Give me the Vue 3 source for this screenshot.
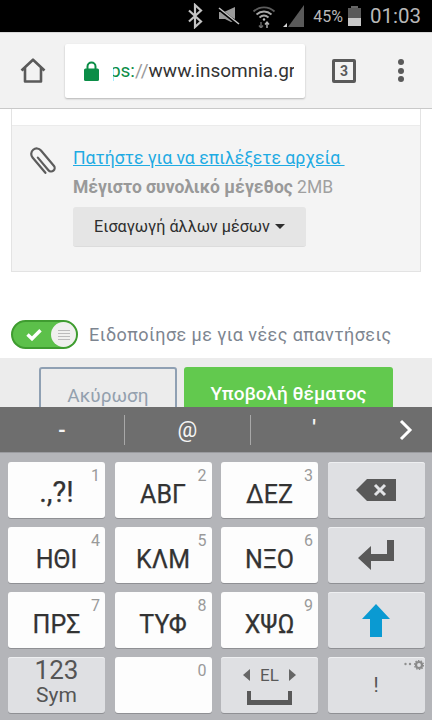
<template>
  <div class="phone">
    <!-- Android status bar -->
    <div class="status-bar">
      <svg class="st-icon" width="16" height="26" viewBox="0 0 16 26" fill="none" stroke="#c4c4c4" stroke-width="2.2">
        <path d="M2 7.5l12 11-6 5.5V2l6 5.5-12 11" />
      </svg>
      <svg class="st-icon mute" width="22" height="20" viewBox="0 0 22 20">
        <path d="M1 6h5l0 0L17 1v12z" fill="#9a9a9a" />
        <path d="M1 6l6 0 9 9-3 1-6-3H1z" fill="#9a9a9a" />
        <path d="M1 3l20 16" stroke="#000" stroke-width="3" />
        <path d="M1 2l20 16" stroke="#c4c4c4" stroke-width="1.6" />
      </svg>
      <svg class="st-icon wifi" width="24" height="24" viewBox="0 0 24 24" fill="none" stroke="#a8a8a8" stroke-width="1.8">
        <path d="M1.5 7.5c6-5.5 15-5.5 21 0" stroke="#5c5c5c" />
        <path d="M4.5 10.5c4.5-4 10.5-4 15 0" />
        <path d="M7.5 13.5c2.700-2.400 6.300-2.400 9 0" />
        <circle cx="12" cy="15.500" r="1.200" fill="#c4c4c4" stroke="none" />
        <path d="M9 18v6M7 21.500l2 2.500 2-2.500" stroke="#6a6a6a" stroke-width="1.400" />
        <path d="M15 24v-6M13 20.500l2-2.500 2 2.500" stroke="#b4b4b4" stroke-width="1.400" />
      </svg>
      <svg class="st-icon signal" width="22" height="22" viewBox="0 0 22 22">
        <path d="M21 0v22H5z" fill="#5a5a5a" />
        <path d="M0 22l4-4v4z" fill="#d8d8d8" />
      </svg>
      <span class="pct">45%</span>
      <div class="battery">
        <div class="battery-cap"></div>
        <div class="battery-body"><div class="battery-fill" :style="{ height: battery + '%' }"></div></div>
      </div>
      <span class="clock">01:03</span>
    </div>

    <!-- Browser toolbar -->
    <div class="toolbar">
      <svg class="home" width="26" height="25" viewBox="0 0 26 25" fill="none" stroke="#5a5a5a" stroke-width="2.600" stroke-linejoin="round">
        <path d="M1.500 12.500L13 1.700l11.500 10.800M5 10v13.500h16V10" />
      </svg>
      <div class="url-bar">
        <svg width="15" height="20" viewBox="0 0 15 20" class="lock">
          <path d="M3.500 8V5.500a4 4 0 0 1 8 0V8" fill="none" stroke="#0b8d47" stroke-width="2" />
          <rect x="0" y="7.500" width="15" height="12.500" rx="1.500" fill="#0b8d47" />
        </svg>
        <div class="url-clip">
          <div class="url-text"><span class="scheme">https:</span><span class="slashes">//</span>www.insomnia.gr</div>
        </div>
      </div>
      <div class="tabs">3</div>
      <div class="menu"><i></i><i></i><i></i></div>
    </div>

    <!-- Page -->
    <div class="page">
      <div class="panel">
        <div class="panel-top"></div>
        <div class="upload">
          <svg class="clip" width="27" height="30" viewBox="0 0 27 30" fill="none" stroke="#5c5c5c" stroke-width="2.200" stroke-linecap="round">
            <path d="M-1.500-7V9.500a3.500 3.500 0 0 0 7 0V-10.500a5.500 5.500 0 0 0-11 0V9.500" transform="translate(13.500 15) rotate(-40)" />
          </svg>
          <div class="upload-body">
            <a class="pick-link">Πατήστε για να επιλέξετε αρχεία&nbsp;</a>
            <div class="limit"><b>Μέγιστο συνολικό μέγεθος</b> 2MB</div>
            <div class="media-btn">Εισαγωγή άλλων μέσων<span class="caret"></span></div>
          </div>
        </div>
      </div>

      <div class="notify">
        <div class="toggle">
          <svg width="16" height="13" viewBox="0 0 16 13" fill="none" stroke="#fff" stroke-width="3.400">
            <path d="M1.500 6.500l4.500 4.300 8.500-8.500" />
          </svg>
          <div class="knob"><i></i><i></i><i></i><i></i></div>
        </div>
        <span class="notify-label">Ειδοποίησε με για νέες απαντήσεις</span>
      </div>

      <div class="actions">
        <div class="btn cancel">Ακύρωση</div>
        <div class="btn submit">Υποβολή θέματος</div>
      </div>
    </div>

    <!-- Keyboard suggestion strip -->
    <div class="suggest">
      <span class="sg dash">-</span>
      <span class="sg at">@</span>
      <span class="sg tick">'</span>
      <svg class="chev" width="14" height="22" viewBox="0 0 14 22" fill="none" stroke="#fff" stroke-width="3">
        <path d="M2 2l9 9-9 9" />
      </svg>
    </div>

    <!-- Keyboard -->
    <div class="keyboard">
      <template v-for="k in keys" :key="k.label">
        <div v-if="k.num" class="key">
          <sup class="num">{{ k.num }}</sup>
          <span class="letters" :class="{ punct: k.num === '1' }">{{ k.label }}</span>
        </div>

        <div v-else-if="k.kind === 'back'" class="key fn">
          <svg width="40" height="22" viewBox="0 0 40 22">
            <path d="M0 11L11 0h29v22H11z" fill="#595959" />
            <path d="M19 6l10 10M29 6L19 16" stroke="#e2e3e6" stroke-width="3" />
          </svg>
        </div>
        <div v-else-if="k.kind === 'enter'" class="key fn">
          <svg width="36" height="32" viewBox="0 0 36 32">
            <path d="M29 1h7v21H13v9L0 19 13 7v8h16z" fill="#595959" />
          </svg>
        </div>
        <div v-else-if="k.kind === 'shift'" class="key fn">
          <svg width="28" height="33" viewBox="0 0 28 33">
            <path d="M14 0l14 15h-8v18H8V15H0z" fill="#0a9ad2" />
          </svg>
        </div>
        <div v-else-if="k.kind === 'sym'" class="key fn sym">
          <span class="sym-top">123</span>
          <span class="sym-bot">Sym</span>
        </div>
        <div v-else-if="k.kind === 'zero'" class="key">
          <sup class="num">0</sup>
        </div>
        <div v-else-if="k.kind === 'space'" class="key fn space">
          <div class="lang"><span class="tri left"></span>EL<span class="tri right"></span></div>
          <svg width="45" height="14" viewBox="0 0 45 14">
            <path d="M0 0h4v9h37V0h4v14H0z" fill="#595959" />
          </svg>
        </div>
        <div v-else class="key fn">
          <svg class="gear" width="20" height="10" viewBox="0 0 20 10">
            <circle cx="1.500" cy="4" r="1.200" fill="#8f8f8f" />
            <circle cx="6" cy="4" r="1.200" fill="#8f8f8f" />
            <circle cx="15" cy="5" r="3" fill="none" stroke="#8a8a8a" stroke-width="2.200" />
            <circle cx="15" cy="5" r="4.500" fill="none" stroke="#8a8a8a" stroke-width="1.200" stroke-dasharray="1.500 1.300" />
          </svg>
          <span class="bang">!</span>
        </div>
      </template>
    </div>
  </div>
</template>

<script setup>
const battery = 45

const keys = [
  { label: '.,?!', num: '1' },
  { label: 'ΑΒΓ', num: '2' },
  { label: 'ΔΕΖ', num: '3' },
  { label: 'back', kind: 'back' },
  { label: 'ΗΘΙ', num: '4' },
  { label: 'ΚΛΜ', num: '5' },
  { label: 'ΝΞΟ', num: '6' },
  { label: 'enter', kind: 'enter' },
  { label: 'ΠΡΣ', num: '7' },
  { label: 'ΤΥΦ', num: '8' },
  { label: 'ΧΨΩ', num: '9' },
  { label: 'shift', kind: 'shift' },
  { label: 'sym', kind: 'sym' },
  { label: 'zero', kind: 'zero' },
  { label: 'space', kind: 'space' },
  { label: 'bang', kind: 'bang' }
]
</script>

<style>
html, body {
  margin: 0;
  background: #fff;
}
</style>

<style scoped>
.phone {
  width: 432px;
  height: 720px;
  display: flex;
  flex-direction: column;
  overflow: hidden;
  font-family: Roboto, "Noto Sans", sans-serif;
}

/* Status bar */
.status-bar {
  height: 32px;
  flex-shrink: 0;
  background: #000;
  border-bottom: 1px solid #d8d8d8;
  display: flex;
  align-items: center;
  justify-content: flex-end;
  padding-right: 11px;
  color: #b8b8b8;
}
.st-icon {
  flex-shrink: 0;
}
.mute {
  margin-left: 15px;
}
.wifi {
  margin-left: 12px;
}
.signal {
  margin-left: 7px;
}
.pct {
  font-size: 16px;
  margin-left: 8px;
}
.battery {
  margin-left: 5px;
  width: 13px;
  display: flex;
  flex-direction: column;
  align-items: center;
}
.battery-cap {
  width: 7px;
  height: 2px;
  background: #666;
}
.battery-body {
  width: 13px;
  height: 18px;
  background: #5a5a5a;
  display: flex;
  flex-direction: column;
  justify-content: flex-end;
}
.battery-fill {
  background: #c8c8c8;
}
.clock {
  font-size: 20.500px;
  margin-left: 9px;
}

/* Toolbar */
.toolbar {
  height: 75px;
  flex-shrink: 0;
  background: #f2f2f2;
  border-bottom: 1px solid #c9c9c9;
  display: flex;
  align-items: center;
  box-sizing: content-box;
}
.home {
  margin-left: 20px;
  flex-shrink: 0;
}
.url-bar {
  margin-left: 19px;
  width: 240px;
  height: 54px;
  background: #fff;
  border-radius: 2px;
  box-shadow: 0 1px 2px rgba(0, 0, 0, 0.25);
  display: flex;
  align-items: center;
  padding-left: 19px;
  box-sizing: border-box;
}
.lock {
  flex-shrink: 0;
}
.url-clip {
  margin-left: 14px;
  width: 181px;
  overflow: hidden;
}
.url-text {
  margin-left: -26px;
  white-space: nowrap;
  font-size: 19px;
  color: #333;
}
.scheme {
  color: #0b8d47;
}
.slashes {
  color: #9a9a9a;
}
.tabs {
  margin-left: 27px;
  width: 24px;
  height: 24px;
  box-sizing: border-box;
  border: 3px solid #5a5a5a;
  border-radius: 2px;
  font-size: 14px;
  font-weight: 700;
  color: #5a5a5a;
  display: flex;
  align-items: center;
  justify-content: center;
}
.menu {
  margin-left: 42px;
  display: flex;
  flex-direction: column;
  gap: 2.500px;
}
.menu i {
  width: 6px;
  height: 6px;
  border-radius: 50%;
  background: #5a5a5a;
}

/* Page */
.page {
  flex: 1;
  min-height: 0;
  background: #fff;
  display: flex;
  flex-direction: column;
  overflow: hidden;
}
.panel {
  margin: 0 11px;
  border: 1px solid #e3e3e3;
  border-top: 0;
}
.panel-top {
  height: 16px;
  background: #fff;
}
.upload {
  height: 146px;
  box-sizing: border-box;
  background: #f4f4f4;
  border-top: 1px solid #ebebeb;
  display: flex;
  padding: 21px 0 0 18px;
}
.clip {
  flex-shrink: 0;
}
.upload-body {
  margin-left: 16px;
  flex: 1;
}
.pick-link {
  display: block;
  font-size: 17.600px;
  line-height: 22px;
  color: #1fabe3;
  text-decoration: underline;
}
.limit {
  margin-top: 7px;
  font-size: 17.500px;
  line-height: 22px;
  color: #a0a0a0;
}
.limit b {
  color: #999;
}
.media-btn {
  margin-top: 9px;
  width: 233px;
  height: 40px;
  background: #e5e5e5;
  border-radius: 3px;
  border-bottom: 1px solid #dcdcdc;
  box-sizing: border-box;
  display: flex;
  align-items: center;
  justify-content: center;
  font-size: 16.200px;
  color: #2e2e2e;
}
.caret {
  margin-left: 5px;
  border-left: 5px solid transparent;
  border-right: 5px solid transparent;
  border-top: 5px solid #2e2e2e;
}

.notify {
  margin-top: 48px;
  padding-left: 11px;
  display: flex;
  align-items: center;
  gap: 11px;
  height: 30px;
}
.toggle {
  width: 67px;
  height: 29px;
  box-sizing: border-box;
  border-radius: 15px;
  background: #5cc04a;
  border: 2px solid #3f9c30;
  display: flex;
  align-items: center;
  justify-content: space-between;
  padding: 0 0 0 13px;
}
.knob {
  width: 25px;
  height: 25px;
  border-radius: 50%;
  background: #f0f0ee;
  display: flex;
  flex-direction: column;
  justify-content: center;
  align-items: center;
  gap: 2px;
}
.knob i {
  width: 12px;
  height: 1px;
  background: #bbb;
}
.notify-label {
  font-size: 18px;
  color: #7d8590;
  letter-spacing: 0.42px;
}

.actions {
  margin-top: 9px;
  flex: 1;
  background: #ececec;
  display: flex;
  padding: 9px 0 0 39px;
  gap: 7px;
}
.btn {
  height: 56px;
  box-sizing: border-box;
  border-radius: 3px;
  display: flex;
  justify-content: center;
  font-size: 19px;
  padding-top: 15px;
}
.cancel {
  width: 138px;
  border: 2px solid #8fa0b3;
  color: #93a0ae;
}
.submit {
  width: 209px;
  background: #62c94e;
  color: #fff;
  font-weight: 500;
}

/* Suggestions */
.suggest {
  height: 45px;
  flex-shrink: 0;
  background: #6e6e6e;
  display: grid;
  grid-template-columns: 125px 126px 126px 1fr;
  align-items: center;
  color: #f5f5f5;
  box-sizing: border-box;
}
.sg {
  height: 30px;
  display: flex;
  align-items: center;
  justify-content: center;
  border-right: 1px solid #a8a8a8;
  font-size: 20px;
}
.dash {
  font-weight: 700;
}
.at {
  font-size: 22px;
}
.tick {
  border-right: 0;
  align-items: flex-start;
  font-weight: 700;
}
.chev {
  justify-self: end;
  margin-right: 19px;
}

/* Keyboard */
.keyboard {
  height: 268px;
  flex-shrink: 0;
  box-sizing: border-box;
  background: #b4b5b9;
  border-top: 1px solid #9a9b9f;
  display: grid;
  grid-template-columns: 97px 97px 97px 97px;
  grid-template-rows: repeat(4, 56px);
  column-gap: 9.500px;
  row-gap: 9px;
  padding: 9px 0 0 8px;
}
.key {
  position: relative;
  background: #fdfdfd;
  border-radius: 3px;
  box-shadow: 0 1px 0 #8f9094;
  display: flex;
  align-items: center;
  justify-content: center;
  color: #333;
}
.fn {
  background: #dfe0e3;
  box-shadow: 0 1px 0 #8f9094, inset 0 1px 0 #eeeff1;
}
.letters {
  font-size: 25px;
  margin-top: 8px;
  -webkit-text-stroke: 0.25px #333;
}
.punct {
  font-size: 29px;
  margin-top: 4px;
}
.num {
  position: absolute;
  top: 5px;
  right: 5px;
  font-size: 16px;
  line-height: 18px;
  color: #9a9a9a;
  vertical-align: baseline;
}
.sym {
  flex-direction: column;
  color: #555;
  padding-bottom: 6px;
  box-sizing: border-box;
}
.sym-top {
  font-size: 26px;
  line-height: 26px;
}
.sym-bot {
  font-size: 21px;
  line-height: 24px;
}
.space {
  flex-direction: column;
  gap: 6px;
}
.lang {
  display: flex;
  align-items: center;
  gap: 10px;
  font-size: 17px;
  color: #595959;
}
.tri {
  border-top: 6px solid transparent;
  border-bottom: 6px solid transparent;
}
.tri.left {
  border-right: 7px solid #666;
}
.tri.right {
  border-left: 7px solid #666;
}
.gear {
  position: absolute;
  top: 3px;
  right: 1px;
}
.bang {
  font-size: 20px;
  color: #555;
}
</style>
